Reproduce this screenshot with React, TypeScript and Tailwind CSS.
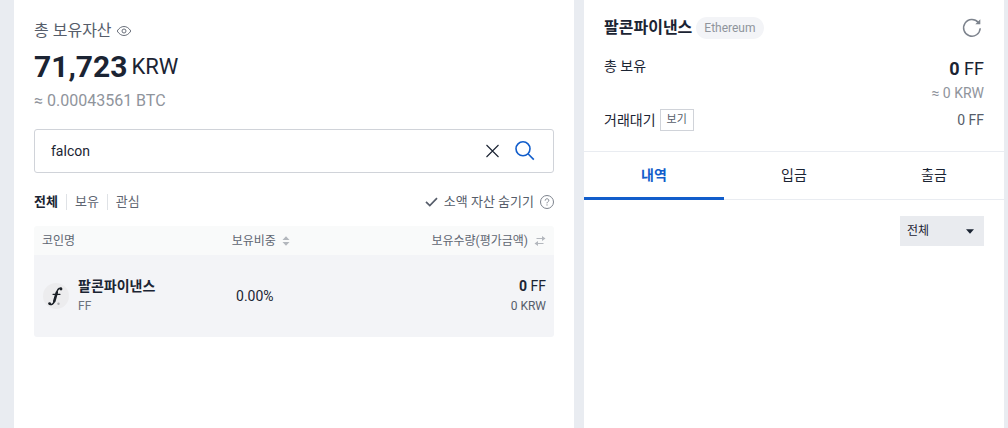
import { useState } from 'react'
import clsx from 'clsx'

const filters = ['전체', '보유', '관심']
const tabs = ['내역', '입금', '출금']

export default function App() {
  return (
    <div className="grid min-h-screen grid-cols-[4fr_3fr] gap-[10px] bg-[#e9ecf1] pr-1 pl-[14px] font-[Roboto,'Noto_Sans_CJK_KR',sans-serif] text-[#1b2433]">
      <AssetPanel />
      <CoinPanel />
    </div>
  )
}

function AssetPanel() {
  const [keyword, setKeyword] = useState('falcon')
  const [filter, setFilter] = useState('전체')

  return (
    <main className="min-w-0 bg-white px-5 pt-5">
      <div className="flex h-[22px] items-center gap-1">
        <h1 className="text-base leading-[22px] text-[#565d6a]">총 보유자산</h1>
        <button type="button" aria-label="자산 숨기기">
          <EyeIcon />
        </button>
      </div>
      <p className="mt-[5px] flex h-10 items-center gap-1">
        <strong className="text-[30px] leading-10 font-bold">71,723</strong>
        <span className="text-[22px] leading-10">KRW</span>
      </p>
      <p className="mt-[2px] text-base leading-6 text-[#8f949c]">≈ 0.00043561 BTC</p>

      <form
        className="mt-4 flex h-11 items-center rounded-[3px] border border-[#d0d3d9] pr-[18px] pl-4"
        onSubmit={(e) => e.preventDefault()}
      >
        <input
          className="min-w-0 flex-1 text-sm leading-5 outline-none"
          aria-label="코인 검색"
          value={keyword}
          onChange={(e) => setKeyword(e.target.value)}
        />
        <button type="button" aria-label="지우기" onClick={() => setKeyword('')}>
          <ClearIcon />
        </button>
        <button type="submit" aria-label="검색" className="ml-4">
          <SearchIcon />
        </button>
      </form>

      <div className="mt-[19px] flex h-5 items-center justify-between text-[13px] leading-5">
        <div className="flex items-center">
          {filters.map((name, i) => (
            <div key={name} className="flex items-center">
              {i > 0 && <span className="mx-2 h-4 w-px bg-[#dfe2e6]" />}
              <button
                type="button"
                onClick={() => setFilter(name)}
                className={filter === name ? 'font-bold' : 'text-[#5f6672]'}
              >
                {name}
              </button>
            </div>
          ))}
        </div>
        <div className="flex items-center gap-[6px] text-[#565d6a]">
          <label className="flex items-center gap-[6px]">
            <input type="checkbox" className="sr-only" />
            <CheckIcon />
            소액 자산 숨기기
          </label>
          <button type="button" aria-label="도움말">
            <HelpIcon />
          </button>
        </div>
      </div>

      <table className="mt-[14px] w-full table-fixed overflow-hidden rounded-[3px]">
        <thead className="bg-[#f9fafa] text-xs leading-5 text-[#5f6672]">
          <tr className="h-[29px]">
            <th className="w-[34%] pl-2 text-left font-normal">코인명</th>
            <th className="w-[20%] pr-1 font-normal">
              <span className="flex items-center justify-center gap-[6px]">
                보유비중
                <SortIcon />
              </span>
            </th>
            <th className="pr-2 font-normal">
              <span className="flex items-center justify-end gap-[6px]">
                보유수량(평가금액)
                <SwapIcon />
              </span>
            </th>
          </tr>
        </thead>
        <tbody className="bg-[#f3f4f7]">
          <tr className="h-[82px]">
            <td className="pl-2">
              <div className="flex items-center gap-2">
                <CoinLogo />
                <div>
                  <p className="text-sm leading-5 font-bold">팔콘파이낸스</p>
                  <p className="text-xs leading-5 text-[#6b717c]">FF</p>
                </div>
              </div>
            </td>
            <td className="pr-4 text-center text-sm leading-5">0.00%</td>
            <td className="pr-2 text-right">
              <p className="text-sm leading-5">
                <strong className="font-bold">0</strong> FF
              </p>
              <p className="text-xs leading-5 text-[#565d6a]">0 KRW</p>
            </td>
          </tr>
        </tbody>
      </table>
    </main>
  )
}

function CoinPanel() {
  const [tab, setTab] = useState('내역')

  return (
    <aside className="min-w-0 bg-white">
      <div className="px-5 pt-4 pb-5">
        <header className="flex h-6 items-center">
          <h2 className="text-base leading-6 font-bold">팔콘파이낸스</h2>
          <span className="ml-1 rounded-full bg-[#f3f4f7] px-2 text-xs leading-[22px] text-[#8f949c]">
            Ethereum
          </span>
          <button type="button" aria-label="새로고침" className="ml-auto">
            <RefreshIcon />
          </button>
        </header>

        <dl className="mt-4 text-sm leading-5">
          <div className="flex justify-between">
            <dt>총 보유</dt>
            <dd className="text-right">
              <p className="text-lg leading-[26px]">
                <strong className="font-bold">0</strong> FF
              </p>
              <p className="leading-[22px] text-[#8f949c]">≈ 0 KRW</p>
            </dd>
          </div>
          <div className="mt-[5px] flex h-[22px] items-center justify-between">
            <dt className="flex items-center gap-1">
              거래대기
              <button
                type="button"
                className="border border-[#d0d3d9] px-[6px] text-[11px] leading-5 text-[#565d6a]"
              >
                보기
              </button>
            </dt>
            <dd className="text-[#565d6a]">0 FF</dd>
          </div>
        </dl>
      </div>

      <nav className="flex h-[49px] border-y border-[#e9ecf1]">
        {tabs.map((name) => (
          <button
            key={name}
            type="button"
            onClick={() => setTab(name)}
            className={clsx(
              '-mb-px flex-1 border-b-[3px] text-sm leading-5',
              tab === name ? 'border-[#115dcb] font-bold text-[#115dcb]' : 'border-transparent'
            )}
          >
            {name}
          </button>
        ))}
      </nav>

      <div className="flex justify-end px-5 pt-4">
        <div className="relative">
          <select
            aria-label="내역 구분"
            className="block h-[30px] w-[84px] appearance-none bg-[#e9ebef] pl-[7px] text-xs leading-5"
          >
            <option>전체</option>
            <option>입금</option>
            <option>출금</option>
          </select>
          <svg
            className="pointer-events-none absolute top-[13px] right-[10px]"
            width="8"
            height="5"
            viewBox="0 0 8 5"
          >
            <path d="M0 .3h8L4 4.7z" fill="#1b2433" />
          </svg>
        </div>
      </div>
    </aside>
  )
}

function EyeIcon() {
  return (
    <svg width="16" height="16" viewBox="0 0 16 16" fill="none" stroke="#6b717c">
      <path d="M1.2 8C3 5 5.4 3.500 8 3.500S13 5 14.800 8C13 11 10.600 12.500 8 12.500S3 11 1.200 8z" />
      <circle cx="8" cy="8" r="2" />
    </svg>
  )
}

function ClearIcon() {
  return (
    <svg width="14" height="14" viewBox="0 0 14 14" fill="none" stroke="#1b2433" strokeWidth="1.1">
      <path d="M1.500 1l12 12M13.500 1l-12 12" />
    </svg>
  )
}

function SearchIcon() {
  return (
    <svg width="20" height="20" viewBox="0 0 20 20" fill="none" stroke="#115dcb" strokeWidth="1.6">
      <circle cx="8" cy="7.800" r="7" />
      <path d="M13 12.800L18.800 18.600" />
    </svg>
  )
}

function CheckIcon() {
  return (
    <svg width="13" height="10" viewBox="0 0 13 10" fill="none" stroke="#565d6a" strokeWidth="1.7">
      <path d="M1 4.800l3.800 3.700L12 1.200" />
    </svg>
  )
}

function HelpIcon() {
  return (
    <svg width="14" height="14" viewBox="0 0 14 14" fill="none" stroke="#7d838d">
      <circle cx="7" cy="7" r="6.500" />
      <path d="M5.200 5.600c0-1.200.8-1.800 1.800-1.800s1.800.6 1.800 1.600c0 1.300-1.800 1.400-1.800 2.900M7 9.400v1.100" />
    </svg>
  )
}

function SortIcon() {
  return (
    <svg width="8" height="10" viewBox="0 0 8 10" fill="#b3b7bd">
      <path d="M4 .2L7.500 4h-7zM4 9.800L.5 6h7z" />
    </svg>
  )
}

function SwapIcon() {
  return (
    <svg width="12" height="10" viewBox="0 0 12 10">
      <path d="M2.500 2.500H9M9.500 7.500H3" stroke="#b3b7bd" strokeWidth="1.200" />
      <path d="M8 0l3.500 2.500L8 5zM4 5L.5 7.500 4 10z" fill="#b3b7bd" />
    </svg>
  )
}

function RefreshIcon() {
  return (
    <svg width="24" height="24" viewBox="0 0 24 24" fill="none" stroke="#7d838d" strokeWidth="1.500">
      <path d="M20.200 12.300A8.300 8.300 0 1 1 18.300 6.600" />
      <path d="M20.300 3.200v5h-5z" fill="#7d838d" stroke="none" />
    </svg>
  )
}

function CoinLogo() {
  return (
    <svg width="28" height="28" viewBox="0 0 28 28">
      <circle cx="14" cy="14" r="13" fill="#ececee" />
      <g fill="none" stroke="#1b2027" strokeLinecap="round">
        <path d="M14.800 10.500L12.300 19.200" strokeWidth="2.600" />
        <path
          d="M14.800 10.500C15.400 7.400 17 5.900 19 6.200M12.300 19.200C11.500 22 9.600 23 7.600 22.200"
          strokeWidth="1.500"
        />
        <path d="M11 12.300h7" strokeWidth="1.200" />
      </g>
      <circle cx="19" cy="7" r="1.400" fill="#1b2027" />
      <circle cx="7.600" cy="21.600" r="1.400" fill="#1b2027" />
      <circle cx="16.500" cy="21.800" r="1.200" fill="#a7a9ae" />
    </svg>
  )
}
